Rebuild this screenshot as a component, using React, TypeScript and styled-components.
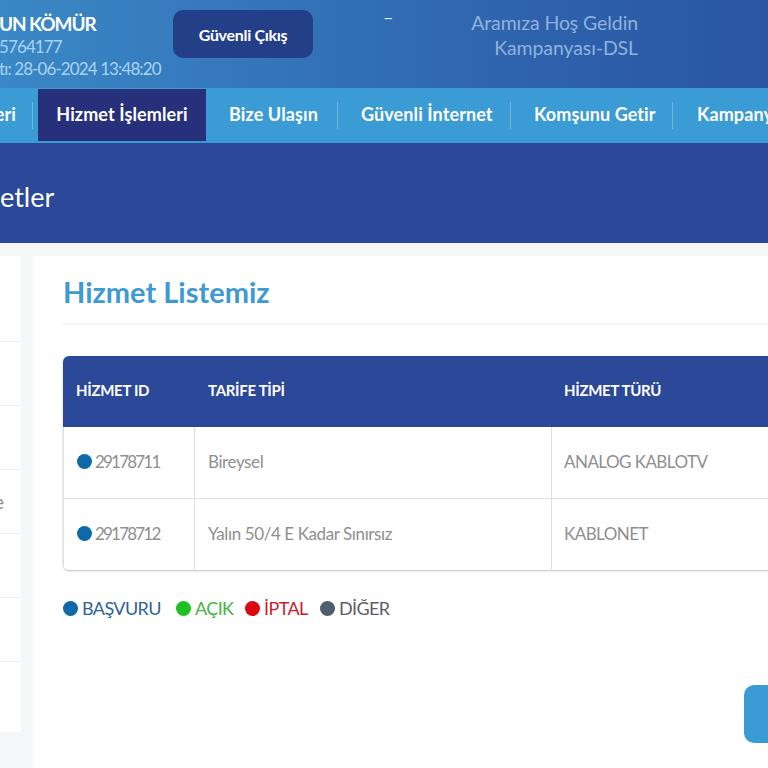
import styled, { createGlobalStyle } from "styled-components";

const GlobalStyle = createGlobalStyle`
  html, body {
    margin: 0;
    padding: 0;
    height: 768px;
    overflow: hidden;
    background: #f5f6f8;
    font-family: "Lato", "Liberation Sans", sans-serif;
  }
  * { box-sizing: border-box; }
`;

const menu = [
  { label: "Bize Ulaşın", width: 132 },
  { label: "Güvenli İnternet", width: 173 },
  { label: "Komşunu Getir", width: 162 },
];

const rows = [
  { id: "29178711", tariff: "Bireysel", type: "ANALOG KABLOTV" },
  { id: "29178712", tariff: "Yalın 50/4 E Kadar Sınırsız", type: "KABLONET" },
];

const legend = [
  { label: "BAŞVURU", dot: "#0f69a8", color: "#2d6496", width: 113 },
  { label: "AÇIK", dot: "#1fc01f", color: "#45b545", width: 69 },
  { label: "İPTAL", dot: "#dc0612", color: "#cf1a2c", width: 75 },
  { label: "DİĞER", dot: "#4d5f6b", color: "#5a6067", width: 80 },
];

function App() {
  return (
    <Page>
      <GlobalStyle />
      <Header>
        <UserInfo>
          <UserName>UN KÖMÜR</UserName>
          <UserLine>5764177</UserLine>
          <UserLine>tı: 28-06-2024 13:48:20</UserLine>
        </UserInfo>
        <LogoutButton>Güvenli Çıkış</LogoutButton>
        <Dash>–</Dash>
        <Campaign>
          Aramıza Hoş Geldin
          <br />
          Kampanyası-DSL
        </Campaign>
      </Header>
      <Nav>
        <FirstItem>eri</FirstItem>
        <ActiveItem>Hizmet İşlemleri</ActiveItem>
        {menu.map((m) => (
          <NavItem key={m.label} $width={m.width}>
            {m.label}
          </NavItem>
        ))}
        <LastItem>Kampanyalar</LastItem>
      </Nav>
      <Banner>etler</Banner>
      <Content>
        <Sidebar>
          <SideRow $h={86} />
          <SideRow $h={64} />
          <SideRow $h={64} />
          <SideRow $h={64}>e</SideRow>
          <SideRow $h={64} />
          <SideRow $h={64} />
          <SideRow $h={70} $last />
        </Sidebar>
        <Main>
          <Title>Hizmet Listemiz</Title>
          <Table>
            <colgroup>
              <col style={{ width: 132 }} />
              <col style={{ width: 357 }} />
              <col />
            </colgroup>
            <thead>
              <tr>
                <Th>HİZMET ID</Th>
                <Th>TARİFE TİPİ</Th>
                <Th>HİZMET TÜRÜ</Th>
              </tr>
            </thead>
            <tbody>
              {rows.map((r) => (
                <tr key={r.id}>
                  <Td>
                    <IdCell>
                      <Dot $color="#0f69a8" />
                      {r.id}
                    </IdCell>
                  </Td>
                  <Td>{r.tariff}</Td>
                  <Td>{r.type}</Td>
                </tr>
              ))}
            </tbody>
          </Table>
          <Legend>
            {legend.map((l) => (
              <LegendItem key={l.label} $color={l.color} $width={l.width}>
                <Dot $color={l.dot} />
                {l.label}
              </LegendItem>
            ))}
          </Legend>
          <CornerButton />
        </Main>
      </Content>
    </Page>
  );
}
export default App;

const Page = styled.div`
  width: 768px;
  height: 768px;
  overflow: hidden;
`;

const Header = styled.header`
  height: 88px;
  display: flex;
  background: linear-gradient(90deg, #3a88c6 0%, #2e62ac 70%, #2a55a3 100%);
`;

const UserInfo = styled.div`
  width: 173px;
  padding-top: 12px;
  margin-left: -1px;
  color: #a9d3f2;
  font-size: 17px;
  line-height: 22px;
  letter-spacing: -0.9px;
  white-space: nowrap;
`;

const UserName = styled.div`
  color: #fff;
  font-size: 19px;
  font-weight: 700;
  line-height: 24px;
  letter-spacing: -1.1px;
`;

const UserLine = styled.div``;

const LogoutButton = styled.div`
  width: 140px;
  height: 48px;
  margin-top: 10px;
  margin-left: 1px;
  border-radius: 10px;
  background: #233f88;
  color: #fff;
  font-size: 16px;
  font-weight: 700;
  letter-spacing: -0.3px;
  display: flex;
  align-items: center;
  justify-content: center;
`;

const Dash = styled.div`
  margin: 6px 0 0 70px;
  width: 10px;
  color: #dfe9f6;
  font-size: 18px;
`;

const Campaign = styled.div`
  width: 245px;
  padding-top: 10px;
  text-align: right;
  color: #8fb2de;
  font-size: 19.5px;
  line-height: 25px;
  letter-spacing: -0.1px;
`;

const Nav = styled.nav`
  height: 55px;
  display: flex;
  align-items: flex-start;
  background: #3a9bd5;
  white-space: nowrap;
`;

const Item = styled.div`
  height: 52px;
  margin-top: 1px;
  padding-bottom: 2px;
  display: flex;
  align-items: center;
  flex-shrink: 0;
  color: #fff;
  font-size: 18px;
  font-weight: 700;
  letter-spacing: 0.1px;
`;

const Separated = styled(Item)`
  position: relative;

  &::after {
    content: "";
    position: absolute;
    right: 0;
    top: 13px;
    width: 1px;
    height: 27px;
    background: #6db7e3;
  }
`;

const FirstItem = styled(Separated)`
  width: 33px;
  margin-right: 5px;
  padding-right: 17px;
  justify-content: flex-end;
`;

const NavItem = styled(Separated)<{ $width: number }>`
  width: ${(p) => p.$width}px;
  padding-left: 23px;
`;

const ActiveItem = styled(Item)`
  width: 168px;
  justify-content: center;
  background: #27307a;
`;

const LastItem = styled(Item)`
  padding-left: 24px;
`;

const Banner = styled.div`
  height: 100px;
  padding-top: 38px;
  background: #2b4899;
  color: #fff;
  font-size: 27px;
  line-height: 32px;
`;

const Content = styled.div`
  display: flex;
  padding-top: 13px;
  gap: 12px;
`;

const Sidebar = styled.aside`
  width: 21px;
  height: 476px;
  background: #fff;
  flex-shrink: 0;
`;

const SideRow = styled.div<{ $h: number; $last?: boolean }>`
  height: ${(p) => p.$h}px;
  border-bottom: ${(p) => (p.$last ? "none" : "1px solid #eceef0")};
  display: flex;
  align-items: center;
  margin-left: -6px;
  color: #8d8d8d;
  font-size: 19px;
`;

const Main = styled.main`
  position: relative;
  flex: 1;
  height: 512px;
  padding: 0 0 0 30px;
  background: #fff;
`;

const Title = styled.h1`
  margin: 0;
  height: 69px;
  padding-top: 17px;
  border-bottom: 2px solid #f3f4f6;
  color: #3f9ad3;
  font-size: 29px;
  font-weight: 700;
  line-height: 38px;
`;

const Table = styled.table`
  width: 900px;
  margin-top: 31px;
  table-layout: fixed;
  border-collapse: separate;
  border-spacing: 0;
  border-radius: 6px 0 0 6px;
  overflow: hidden;
  box-shadow: 0 1px 2px rgba(0, 0, 0, 0.25);
`;

const Th = styled.th`
  height: 71px;
  padding: 0 13px 3px;
  background: #2b4899;
  color: #fff;
  font-size: 15px;
  font-weight: 700;
  text-align: left;
  letter-spacing: -0.3px;

  &:last-child {
    padding-left: 12px;
  }
`;

const Td = styled.td`
  height: 72px;
  padding: 0 13px 3px;
  color: #8f8f8f;
  font-size: 17px;
  letter-spacing: -0.4px;
  border-right: 1px solid #dfe1e3;
  border-bottom: 1px solid #dfe1e3;

  tr:last-child & {
    height: 71px;
    border-bottom: none;
  }
  &:first-child {
    border-left: 1px solid #dfe1e3;
  }
  &:last-child {
    padding-left: 12px;
    letter-spacing: -0.55px;
  }
`;

const IdCell = styled.div`
  display: flex;
  align-items: center;
  gap: 3px;
  letter-spacing: -1.8px;
`;

const Dot = styled.span<{ $color: string }>`
  width: 15px;
  height: 15px;
  border-radius: 50%;
  background: ${(p) => p.$color};
  flex-shrink: 0;
`;

const Legend = styled.div`
  display: flex;
  margin-top: 27px;
`;

const LegendItem = styled.div<{ $color: string; $width: number }>`
  width: ${(p) => p.$width}px;
  display: flex;
  align-items: center;
  gap: 4px;
  color: ${(p) => p.$color};
  font-size: 18px;
  letter-spacing: -0.6px;
`;

const CornerButton = styled.div`
  position: absolute;
  left: 711px;
  top: 429px;
  width: 80px;
  height: 58px;
  border-radius: 10px;
  background: #3a9bd5;
`;
